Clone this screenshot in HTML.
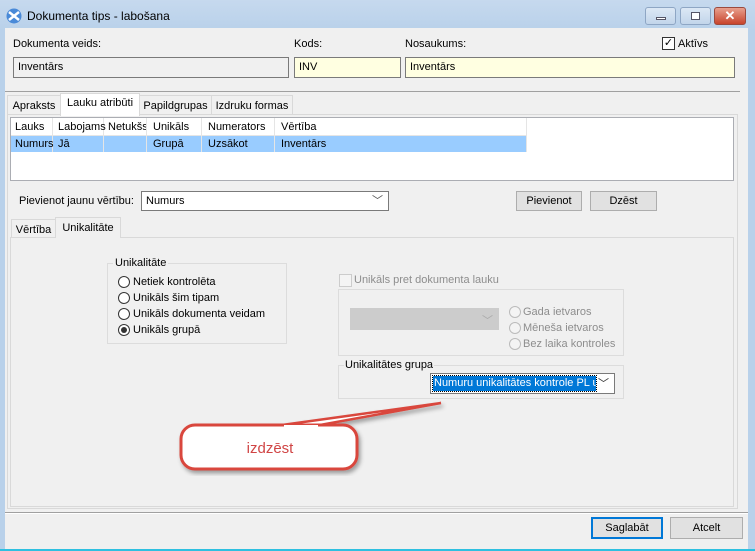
<!DOCTYPE html>
<html><head><meta charset="utf-8"><style>
*{box-sizing:border-box;margin:0;padding:0}
body{width:755px;height:551px;overflow:hidden;background:#b9d1ea;font-family:"Liberation Sans",sans-serif;font-size:11px;color:#000;position:relative}
.a{position:absolute;white-space:nowrap}
.fld{position:absolute;border:1px solid #7a7a7a;padding:0 4px;height:21px;line-height:19px;white-space:nowrap;overflow:hidden}
.btn{position:absolute;border:1px solid #adadad;background:#e1e1e1;text-align:center;line-height:18px}
.rad{position:absolute;width:12px;height:12px;border:1px solid #333;border-radius:50%;background:#fff}
.tab{position:absolute;border:1px solid #d9d9d9;border-bottom:none;background:#f0f0f0;padding:4px 0 0;text-align:center;height:20px;white-space:nowrap}
.col{position:absolute;top:0;height:34px;border-right:1px solid #e5e5e5}
</style></head><body>
<div class="a" style="left:0;top:0;width:755px;height:30px;background:linear-gradient(#c6d9ee,#b9d1ea)"></div>
<svg class="a" style="left:6px;top:8px" width="16" height="16"><circle cx="8" cy="8" r="7.5" fill="#4a8ad8"/><path d="M3 4l10 8M13 4L3 12" stroke="#fff" stroke-width="2.5"/></svg>
<div class="a" style="left:27px;top:9px;font-size:12px">Dokumenta tips - labošana</div>
<div class="a" style="left:645px;top:7px;width:31px;height:18px;border:1px solid #8ea6c4;border-radius:3px;background:linear-gradient(#dce8f5,#c2d5ea)"><div class="a" style="left:10px;top:9px;width:10px;height:3px;background:#fff;border:1px solid #556"></div></div>
<div class="a" style="left:680px;top:7px;width:31px;height:18px;border:1px solid #8ea6c4;border-radius:3px;background:linear-gradient(#dce8f5,#c2d5ea)"><div class="a" style="left:10px;top:4px;width:9px;height:8px;background:#fff;border:1px solid #556"></div></div>
<div class="a" style="left:714px;top:7px;width:32px;height:18px;border:1px solid #9b4a3e;border-radius:3px;background:linear-gradient(#e8a08e,#c8442c);color:#fff;text-align:center;font-weight:bold;font-size:13px;line-height:16px">✕</div>
<div class="a" style="left:5px;top:28px;width:743px;height:521px;background:#f0f0f0"></div>
<div class="a" style="left:0;top:549px;width:755px;height:2px;background:#2ec0e0"></div>
<div class="a" style="left:13px;top:38px">Dokumenta veids:</div>
<div class="a" style="left:294px;top:38px">Kods:</div>
<div class="a" style="left:405px;top:38px">Nosaukums:</div>
<div class="a" style="left:662px;top:37px;width:13px;height:13px;border:1px solid #333;background:#fff;font-size:11px;line-height:11px;text-align:center">✓</div>
<div class="a" style="left:678px;top:38px">Aktīvs</div>
<div class="fld" style="left:13px;top:57px;width:276px;background:#f0f0f0">Inventārs</div>
<div class="fld" style="left:294px;top:57px;width:107px;background:#ffffe1">INV</div>
<div class="fld" style="left:405px;top:57px;width:330px;background:#ffffe1">Inventārs</div>
<div class="a" style="left:5px;top:91px;width:735px;height:1px;background:#a0a0a0"></div>
<div class="tab" style="left:7px;top:95px;width:54px">Apraksts</div>
<div class="tab" style="left:139px;top:95px;width:73px">Papildgrupas</div>
<div class="tab" style="left:211px;top:95px;width:82px">Izdruku formas</div>
<div class="a" style="left:7px;top:114px;width:731px;height:395px;border:1px solid #d9d9d9;background:#fff"></div>
<div class="a" style="left:8px;top:115px;width:729px;height:393px;background:#f0f0f0"></div>
<div class="tab" style="left:60px;top:93px;width:80px;height:23px;background:#fff;padding-top:3px">Lauku atribūti</div>
<div class="a" style="left:10px;top:117px;width:724px;height:64px;border:1px solid #abadb3;background:#fff"></div>
<div class="a" style="left:11px;top:136px;width:516px;height:16px;background:#99ccff"></div>
<div class="a" style="left:11px;top:118px;width:516px;height:34px">
<div class="col" style="left:0;width:42px"></div><div class="col" style="left:42px;width:51px"></div><div class="col" style="left:93px;width:43px"></div><div class="col" style="left:136px;width:55px"></div><div class="col" style="left:191px;width:73px"></div><div class="col" style="left:264px;width:252px"></div>
<div class="a" style="left:0;top:17px;width:516px;height:1px;background:#e5e5e5"></div>
<div class="a" style="left:4px;top:3px">Lauks</div><div class="a" style="left:47px;top:3px">Labojams</div><div class="a" style="left:97px;top:3px;width:38px;overflow:hidden">Netukšs</div><div class="a" style="left:142px;top:3px">Unikāls</div><div class="a" style="left:197px;top:3px">Numerators</div><div class="a" style="left:270px;top:3px">Vērtība</div>
<div class="a" style="left:4px;top:20px">Numurs</div><div class="a" style="left:47px;top:20px">Jā</div><div class="a" style="left:142px;top:20px">Grupā</div><div class="a" style="left:197px;top:20px">Uzsākot</div><div class="a" style="left:270px;top:20px">Inventārs</div>
</div>
<div class="a" style="left:19px;top:195px">Pievienot jaunu vērtību:</div>
<div class="fld" style="left:141px;top:191px;width:248px;height:20px;background:#fff;line-height:18px">Numurs<span class="a" style="right:5px;top:0;color:#555">﹀</span></div>
<div class="btn" style="left:516px;top:191px;width:66px;height:20px">Pievienot</div>
<div class="btn" style="left:590px;top:191px;width:67px;height:20px">Dzēst</div>
<div class="tab" style="left:11px;top:219px;width:45px;height:19px">Vērtība</div>
<div class="a" style="left:10px;top:237px;width:724px;height:270px;border:1px solid #d9d9d9;background:#f0f0f0"></div>
<div class="tab" style="left:55px;top:217px;width:66px;height:21px;background:#f0f0f0">Unikalitāte</div>
<div class="a" style="left:107px;top:263px;width:180px;height:81px;border:1px solid #dcdcdc"></div>
<div class="a" style="left:113px;top:257px;background:#f0f0f0;padding:0 2px">Unikalitāte</div>
<div class="rad" style="left:118px;top:276px"></div><div class="a" style="left:133px;top:276px">Netiek kontrolēta</div>
<div class="rad" style="left:118px;top:292px"></div><div class="a" style="left:133px;top:292px">Unikāls šim tipam</div>
<div class="rad" style="left:118px;top:308px"></div><div class="a" style="left:133px;top:308px">Unikāls dokumenta veidam</div>
<div class="rad" style="left:118px;top:324px"><div class="a" style="left:2px;top:2px;width:6px;height:6px;border-radius:50%;background:#333"></div></div><div class="a" style="left:133px;top:324px">Unikāls grupā</div>
<div class="a" style="left:339px;top:274px;width:13px;height:13px;border:1px solid #ccc;background:#f4f4f4"></div>
<div class="a" style="left:354px;top:274px;color:#8d8d8d">Unikāls pret dokumenta lauku</div>
<div class="a" style="left:338px;top:289px;width:286px;height:67px;border:1px solid #dcdcdc"></div>
<div class="a" style="left:350px;top:308px;width:149px;height:22px;border:1px solid #ccc;background:#ccc"><span class="a" style="right:5px;top:3px;color:#aaa">﹀</span></div>
<div class="rad" style="left:509px;top:306px;border-color:#bbb;background:#f4f4f4"></div><div class="a" style="left:523px;top:306px;color:#8d8d8d">Gada ietvaros</div>
<div class="rad" style="left:509px;top:322px;border-color:#bbb;background:#f4f4f4"></div><div class="a" style="left:523px;top:322px;color:#8d8d8d">Mēneša ietvaros</div>
<div class="rad" style="left:509px;top:338px;border-color:#bbb;background:#f4f4f4"></div><div class="a" style="left:523px;top:338px;color:#8d8d8d">Bez laika kontroles</div>
<div class="a" style="left:338px;top:365px;width:286px;height:34px;border:1px solid #dcdcdc"></div>
<div class="a" style="left:344px;top:359px;background:#f0f0f0;padding:0 1px">Unikalitātes grupa</div>
<div class="a" style="left:430px;top:373px;width:185px;height:21px;border:1px solid #7a7a7a;background:#fff;overflow:hidden"><span class="a" style="left:2px;top:2px;width:163px;height:15px;background:#0078d7;color:#fff;padding-left:1px;line-height:15px;overflow:hidden;outline:1px dotted #000">Numuru unikalitātes kontrole PL un</span><span class="a" style="right:5px;top:1px;color:#333">﹀</span></div>
<svg class="a" style="left:170px;top:395px" width="280" height="90">
<defs><filter id="s"><feDropShadow dx="2" dy="3" stdDeviation="2" flood-opacity="0.35"/></filter></defs>
<g filter="url(#s)"><path d="M112 30 L271 8 L150 30 Z" fill="#fff" stroke="#d9463d" stroke-width="2.5"/>
<rect x="11" y="30" width="176" height="44" rx="14" fill="#fff" stroke="#d9463d" stroke-width="3"/>
<path d="M114 31.5 L148 31.5" stroke="#fff" stroke-width="3"/></g>
<text x="100" y="58" text-anchor="middle" font-family="Liberation Sans" font-size="15" fill="#d04545">izdzēst</text>
</svg>
<div class="a" style="left:5px;top:512px;width:743px;height:1px;background:#a0a0a0"></div>
<div class="a" style="left:5px;top:513px;width:743px;height:1px;background:#fff"></div>
<div class="btn" style="left:591px;top:517px;width:72px;height:22px;border:2px solid #0078d7;line-height:18px">Saglabāt</div>
<div class="btn" style="left:670px;top:517px;width:73px;height:22px;line-height:20px">Atcelt</div>
</body></html>
